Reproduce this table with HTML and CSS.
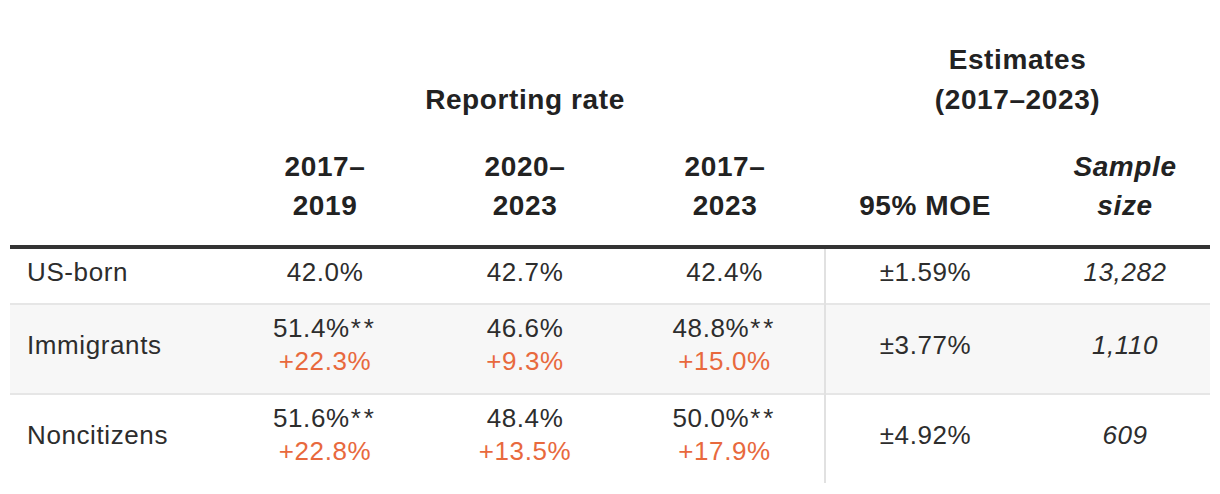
FILE: index.html
```html
<!DOCTYPE html>
<html lang="en">
<head>
<meta charset="utf-8">
<title>Reporting rate</title>
<link rel="stylesheet" href="styles.css">
</head>
<body>
<table class="rates">
  <colgroup>
    <col class="c-label">
    <col class="c-num">
    <col class="c-num">
    <col class="c-num">
    <col class="c-num">
    <col class="c-sample">
  </colgroup>
  <thead>
    <tr class="group-row">
      <th></th>
      <th colspan="3" class="group">Reporting rate</th>
      <th colspan="2" class="group">Estimates<br>(2017–2023)</th>
    </tr>
    <tr class="col-row">
      <th></th>
      <th>2017–<br>2019</th>
      <th>2020–<br>2023</th>
      <th>2017–<br>2023</th>
      <th>95% MOE</th>
      <th class="sample"><em>Sample<br>size</em></th>
    </tr>
  </thead>
  <tbody>
    <tr class="first">
      <td class="label">US-born</td>
      <td>42.0%</td>
      <td>42.7%</td>
      <td>42.4%</td>
      <td class="moe">±1.59%</td>
      <td class="sample size">13,282</td>
    </tr>
    <tr class="shaded">
      <td class="label">Immigrants</td>
      <td>51.4%<span class="sig">**</span><br><span class="diff">+22.3%</span></td>
      <td>46.6%<br><span class="diff">+9.3%</span></td>
      <td>48.8%<span class="sig">**</span><br><span class="diff">+15.0%</span></td>
      <td class="moe">±3.77%</td>
      <td class="sample size">1,110</td>
    </tr>
    <tr>
      <td class="label">Noncitizens</td>
      <td>51.6%<span class="sig">**</span><br><span class="diff">+22.8%</span></td>
      <td>48.4%<br><span class="diff">+13.5%</span></td>
      <td>50.0%<span class="sig">**</span><br><span class="diff">+17.9%</span></td>
      <td class="moe">±4.92%</td>
      <td class="sample size">609</td>
    </tr>
  </tbody>
</table>
</body>
</html>
```
FILE: styles.css
```css
html, body {
  margin: 0;
  padding: 0;
  background: #ffffff;
}

body {
  font-family: "Liberation Sans", Arial, sans-serif;
  color: #222222;
}

.rates {
  width: 1200px;
  margin: 40px 10px 0 10px;
  border-collapse: collapse;
  table-layout: fixed;
}

.c-label { width: 215px; }
.c-num { width: 200px; }
.c-sample { width: 185px; }

.rates th {
  font-weight: 700;
  font-size: 28px;
  letter-spacing: 0.6px;
  text-align: center;
  vertical-align: bottom;
  padding: 0;
  color: #222222;
}

.group-row th {
  line-height: 40px;
  padding-bottom: 27px;
}

.col-row th {
  line-height: 39px;
  padding-bottom: 20px;
  border-bottom: 4px solid #333333;
}

.rates th em {
  font-style: italic;
}

.rates td {
  font-size: 26px;
  line-height: 33px;
  letter-spacing: 0.6px;
  text-align: center;
  vertical-align: middle;
  padding: 7px 0 15px 0;
  color: #2d2d2d;
}

.rates tr.first td {
  padding-bottom: 14px;
}

.rates tbody tr {
  border-bottom: 2px solid #e6e6e6;
}

.rates tbody tr:last-child {
  border-bottom: none;
}

.rates tbody tr.shaded {
  background: #f7f7f7;
}

.rates td.label {
  text-align: left;
  padding-left: 17px;
}

.rates td.moe {
  border-left: 2px solid #e1e1e1;
}

.sample {
  padding-left: 15px !important;
}

.rates td.size {
  font-style: italic;
}

.sig {
  letter-spacing: 3px;
  padding-left: 1px;
}

.diff {
  color: #e8693d;
}
```
